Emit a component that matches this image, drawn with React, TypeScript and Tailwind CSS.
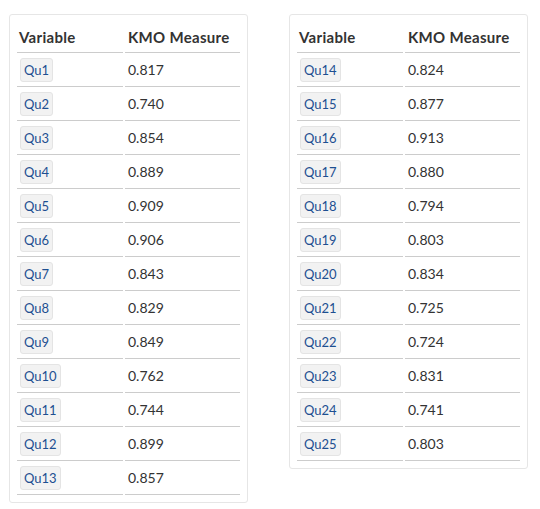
const left: [string, string][] = [
  ["Qu1", "0.817"],
  ["Qu2", "0.740"],
  ["Qu3", "0.854"],
  ["Qu4", "0.889"],
  ["Qu5", "0.909"],
  ["Qu6", "0.906"],
  ["Qu7", "0.843"],
  ["Qu8", "0.829"],
  ["Qu9", "0.849"],
  ["Qu10", "0.762"],
  ["Qu11", "0.744"],
  ["Qu12", "0.899"],
  ["Qu13", "0.857"],
];

const right: [string, string][] = [
  ["Qu14", "0.824"],
  ["Qu15", "0.877"],
  ["Qu16", "0.913"],
  ["Qu17", "0.880"],
  ["Qu18", "0.794"],
  ["Qu19", "0.803"],
  ["Qu20", "0.834"],
  ["Qu21", "0.725"],
  ["Qu22", "0.724"],
  ["Qu23", "0.831"],
  ["Qu24", "0.741"],
  ["Qu25", "0.803"],
];

const KmoTable = ({ rows }: { rows: [string, string][] }) => {
  return (
    <div className="w-[239px] rounded-[3px] border border-[#e6e6e6] bg-white p-[7px]">
      <div className="grid grid-cols-[106px_115px] gap-x-[2px]">
        {/* header */}
        <div className="flex h-[31px] items-center border-b border-[#cccccc] pl-[2px] text-[15px] font-bold tracking-[0.3px] text-[#333333]">
          Variable
        </div>
        <div className="flex h-[31px] items-center border-b border-[#cccccc] pl-[3px] text-[15px] font-bold tracking-[0.3px] text-[#333333]">
          KMO Measure
        </div>
        {rows.map(([name, value]) => (
          <div key={name} className="contents">
            <div className="flex h-[34px] items-center border-b border-[#cccccc] pl-[3px]">
              <span className="rounded-[3px] border border-[#e4e4e4] bg-[#f2f2f2] px-[3px] py-[2px] text-[13px] leading-[18px] text-[#1d4f91]">
                {name}
              </span>
            </div>
            <div className="flex h-[34px] items-center border-b border-[#cccccc] pl-[3px] text-[14px] text-[#333333]">
              {value}
            </div>
          </div>
        ))}
      </div>
    </div>
  );
};

export default function App() {
  return (
    <div className="flex h-[509px] w-[540px] items-start gap-[41px] bg-white pl-[9px] pt-[14px] font-['Lato',sans-serif]">
      <KmoTable rows={left} />
      <KmoTable rows={right} />
    </div>
  );
}
